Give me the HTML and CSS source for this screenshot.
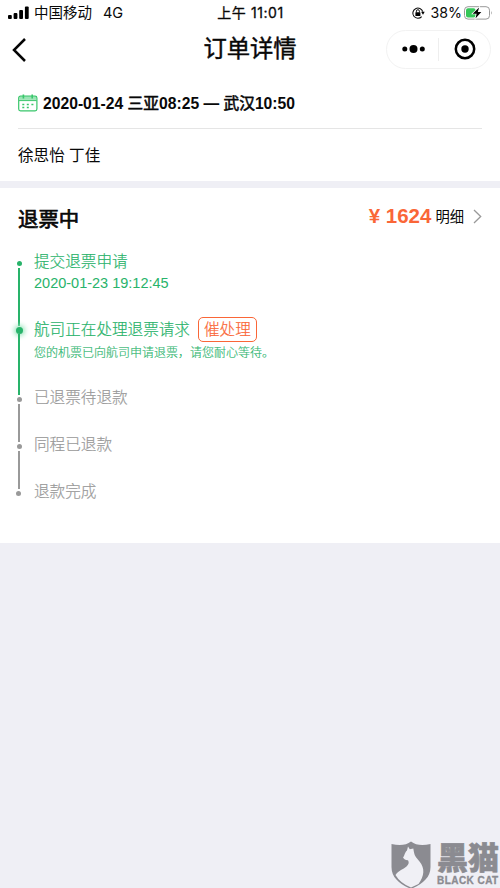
FILE: index.html
```html
<!DOCTYPE html>
<html lang="zh-CN">
<head>
<meta charset="utf-8">
<title>订单详情</title>
<link rel="stylesheet" href="styles.css">
</head>
<body>
<header class="top">
  <div class="status">
    <div class="carrier">
      <svg class="signal" width="22" height="14" viewBox="0 0 22 14"><rect x="0" y="9" width="3.8" height="4" rx="1"/><rect x="5.6" y="7" width="3.8" height="6" rx="1"/><rect x="11.2" y="4" width="3.8" height="9" rx="1"/><rect x="16.9" y="0.5" width="3.8" height="12.5" rx="1"/></svg>
      <span class="operator">中国移动</span><span class="network">4G</span>
    </div>
    <div class="clock">上午 11:01</div>
    <div class="power">
      <svg width="14" height="14" viewBox="0 0 14 14"><path d="M10.7 10.6A5.1 5.1 0 1 1 11.8 5.7" fill="none" stroke="#111" stroke-width="1.1"/><path d="M10.1 5.7h3.6l-1.7 3z"/><rect x="4.4" y="6.3" width="5" height="3.6" rx=".5"/><path d="M5.4 6.5V5.2a1.5 1.5 0 0 1 3 0v1.3" fill="none" stroke="#111"/></svg>
      <span class="percent">38%</span>
      <svg width="29" height="14" viewBox="0 0 29 14"><rect x=".5" y=".7" width="25" height="12.4" rx="3.5" fill="#fff" stroke="#999"/><rect x="2" y="2.2" width="9.6" height="9.4" rx="2" fill="#35c759"/><path d="M27.1 4.8q1.5 2 0 4z" fill="#999"/><path d="M15.1 1.5 8.6 7.7h4l-1.1 4.8 5.8-6.4h-3.5z" stroke="#fff" stroke-width="1.2" paint-order="stroke"/></svg>
    </div>
  </div>
  <div class="nav">
    <svg class="back" width="15" height="24" viewBox="0 0 15 24"><path d="M13 1 2 12l11 11" fill="none" stroke="#050505" stroke-width="2.5"/></svg>
    <h1>订单详情</h1>
    <div class="capsule">
      <svg width="24" height="12" viewBox="0 0 24 12"><circle cx="2.8" cy="6" r="2.5"/><circle cx="11.5" cy="6" r="4"/><circle cx="20.3" cy="6" r="2.5"/></svg>
      <i></i>
      <svg width="22" height="22" viewBox="0 0 22 22"><circle cx="11" cy="11" r="9.2" fill="none" stroke="#000" stroke-width="2.5"/><circle cx="11" cy="11" r="3.7"/></svg>
    </div>
  </div>
</header>
<section class="trip">
  <div class="flight">
    <svg width="20" height="18" viewBox="0 0 20 18" fill="none" stroke="#39c66b"><path d="M1.5 4.4h16.6" stroke="#9be4b5" stroke-width="3"/><rect x=".7" y="2.2" width="18.2" height="14.6" rx="1.8" stroke-width="1.2"/><path d="M1 6.6h17.6" stroke-width="1"/><path d="M5.4.6v4M14.2.6v4" stroke-width="1.6"/><path d="M4.3 10.4h2M8.8 10.4h2M13.4 10.4h2M4.3 13.6h2M8.8 13.6h2" stroke-width="1.5"/></svg>
    <b>2020-01-24 <span class="city">三亚</span>08:25 — <span class="city">武汉</span>10:50</b>
  </div>
  <div class="names">徐思怡 丁佳</div>
</section>
<section class="refund">
  <div class="summary">
    <h2>退票中</h2>
    <div class="amount"><b>¥ 1624</b><span>明细</span><svg width="9" height="15" viewBox="0 0 9 15"><path d="m1 1 6.7 6.5L1 14" fill="none" stroke="#999" stroke-width="1.3"/></svg></div>
  </div>
  <ol class="steps">
    <li class="done submitted"><span class="rail"></span><div class="text"><p class="title">提交退票申请</p><p class="date">2020-01-23 19:12:45</p></div></li>
    <li class="done current"><span class="rail"></span><div class="text"><p class="title">航司正在处理退票请求<span class="urge">催处理</span></p><p class="note">您的机票已向航司申请退票，请您耐心等待。</p></div></li>
    <li><span class="rail"></span><div class="text"><p class="title">已退票待退款</p></div></li>
    <li><span class="rail"></span><div class="text"><p class="title">同程已退款</p></div></li>
    <li class="last"><span class="rail"></span><div class="text"><p class="title">退款完成</p></div></li>
  </ol>
</section>
<footer class="brand">
  <svg width="40" height="48" viewBox="0 0 40 48"><path d="M.5 3Q13 6 20 .5 27 6 39.5 3v23C39.5 37 31 43 20 48 9 43 .5 37 .5 26z" fill="#8b8b91"/><path d="M17 5.500 18.800 8.300 22.300 7.500 23 11.500C23.500 15 26 17.500 28.500 20.500 34 27 33.500 35 27.500 43L20 46.500Q9 42 4.500 34C8 29 12 28.500 15.500 25.500 17.500 23.800 18.500 21.500 17 19.300 15 19.500 12.800 18.300 12 16.300 13.800 14.800 13.500 11.500 16 9.500z" fill="#f0f0f5"/></svg>
  <div class="wordmark"><span class="heimao">黑猫</span><span class="english">BLACK CAT</span></div>
</footer>
</body>
</html>
```
FILE: styles.css
```css
* { box-sizing: border-box; }
body {
  margin: 0;
  height: 888px;
  overflow: hidden;
  display: flex;
  flex-direction: column;
  background: #efeff5;
  color: #080808;
  font-family: "Liberation Sans", "Noto Sans CJK SC", sans-serif;
}
h1, h2, p, ol { margin: 0; padding: 0; }
svg { display: block; flex: none; }
.top { height: 78px; background: #fff; }
.status {
  height: 25px;
  padding: 0 7px 0 8px;
  display: grid;
  grid-template-columns: 1fr auto 1fr;
  align-items: center;
  font: 14.5px/25px Inter, "Noto Sans CJK SC", sans-serif;
}
.carrier, .power { display: flex; align-items: center; }
.operator { margin-left: 4px; }
.network { margin-left: 11px; }
.clock { font-size: 14px; letter-spacing: .6px; -webkit-text-stroke: .3px; }
.power { justify-content: flex-end; }
.percent { margin: 0 2px 0 6px; font-size: 14.2px; }
.nav {
  height: 48px;
  padding: 0 9px 0 12px;
  display: grid;
  grid-template-columns: 102px 1fr 105px;
  align-items: center;
}
.back { margin-top: 2px; }
h1 { font-size: 23.3px; line-height: 34px; font-weight: 400; text-align: center; -webkit-text-stroke: .45px; }
.capsule {
  height: 39px;
  border: 1px solid #f2f2f2;
  border-radius: 20px;
  display: flex;
  align-items: center;
  justify-content: space-between;
  padding: 0 14px 0 15px;
}
.capsule i { width: 1px; height: 23px; margin-right: 4px; background: #eee; }
.trip { height: 103px; padding: 0 18px; background: #fff; }
.flight { height: 51px; display: flex; align-items: center; border-bottom: 1px solid #e5e5e5; font-size: 15.7px; line-height: 22px; }
.flight b { margin: 2px 0 0 5px; white-space: pre; }
.city { font-weight: 400; -webkit-text-stroke: .55px; }
.names { padding-top: 1px; font-size: 15.6px; line-height: 52px; }
.refund { height: 355px; margin-top: 7px; padding: 0 18px; background: #fff; }
.summary { height: 71px; padding-bottom: 7px; display: flex; align-items: center; justify-content: space-between; }
h2 { font-size: 20.4px; line-height: 30px; font-weight: 400; -webkit-text-stroke: .7px; }
.amount { display: flex; align-items: center; margin-top: -8px; }
.amount b { color: #fa6637; font-size: 20.5px; }
.amount span { margin: -2px 9px 0 4px; font-size: 14.3px; }
.steps { list-style: none; color: #999; }
.steps li { height: 47px; display: flex; }
.steps .submitted { height: 67px; }
.steps .current { height: 69px; }
.done { color: #28b36a; }
.rail { width: 2px; display: flex; flex-direction: column; align-items: center; }
.rail::before { content: ""; flex: none; width: 5px; height: 5px; margin: 2px 0; border-radius: 50%; background: currentColor; }
.rail::after { content: ""; flex: 1; width: 1.5px; background: currentColor; }
.current .rail::before { width: 7px; height: 7px; margin: 1px 0 0; box-shadow: 0 0 5px 2px #9be5bd; }
.last .rail::before { margin-left: -1px; }
.last .rail::after { display: none; }
.text { margin: -8px 0 0 14px; white-space: nowrap; }
.current .text { margin-top: -7px; }
.title { height: 22px; display: flex; align-items: center; font-size: 15.6px; line-height: 22px; font-weight: 300; -webkit-text-stroke: .2px; }
.date { font-size: 14.5px; line-height: 21px; }
.urge { height: 25px; margin: -1px 0 0 8px; padding: 0 5px; border: 1px solid #fa6637; border-radius: 5px; color: #fa6637; line-height: 23px; }
.note { font-size: 12px; line-height: 25px; font-weight: 300; -webkit-text-stroke: .15px; }
.brand { margin-top: auto; padding-left: 391px; height: 47px; display: flex; color: #8b8b91; }
.wordmark { margin: 1px 0 0 6px; display: flex; flex-direction: column; white-space: nowrap; }
.heimao { font-size: 31px; line-height: 33px; font-weight: 900; -webkit-text-stroke: .6px; }
.english { font: bold 10px/12px "Liberation Sans", sans-serif; letter-spacing: .45px; -webkit-text-stroke: .3px; }
```
